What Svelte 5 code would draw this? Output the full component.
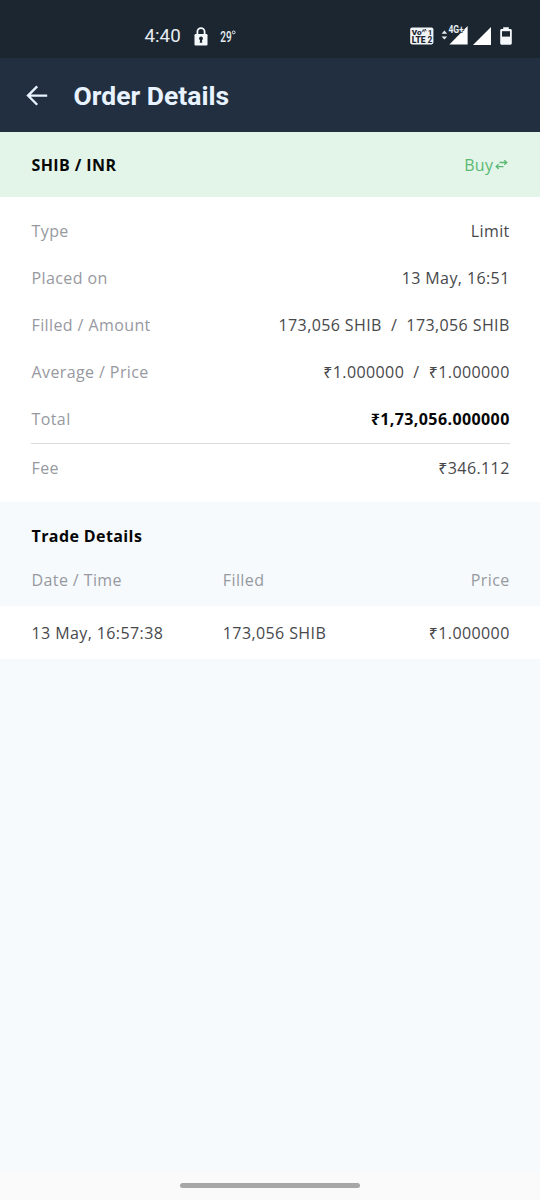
<script lang="ts">
	interface Row {
		label: string;
		value: string;
		total?: boolean;
	}

	interface Trade {
		time: string;
		filled: string;
		price: string;
	}

	const pair = 'SHIB / INR';

	const rows: Row[] = [
		{ label: 'Type', value: 'Limit' },
		{ label: 'Placed on', value: '13 May, 16:51' },
		{ label: 'Filled / Amount', value: '173,056 SHIB  /  173,056 SHIB' },
		{ label: 'Average / Price', value: '₹1.000000  /  ₹1.000000' },
		{ label: 'Total', value: '₹1,73,056.000000', total: true },
		{ label: 'Fee', value: '₹346.112' }
	];

	const trades: Trade[] = [
		{ time: '13 May, 16:57:38', filled: '173,056 SHIB', price: '₹1.000000' }
	];
</script>

<div class="screen">
	<div class="status-bar">
		<div class="status-left">
			<span class="clock">4:40</span>
			<svg class="lock" width="14" height="19" viewBox="0 0 14 19">
				<path d="M3.4 8V4.8a3.6 3.6 0 0 1 7.2 0V8" fill="none" stroke="#f4f8fb" stroke-width="1.8" />
				<rect x="0.5" y="7" width="13" height="11.5" rx="1.2" fill="#f4f8fb" />
				<circle cx="7" cy="11.5" r="1.9" fill="#1c2631" />
				<path d="M6.2 12h1.6l.5 3.7H5.7z" fill="#1c2631" />
			</svg>
			<svg class="temp" width="17" height="22" viewBox="0 -3 17 22">
				<text x="0.2" y="13.6" textLength="11.4" lengthAdjust="spacingAndGlyphs">29</text>
				<circle cx="13.7" cy="4.4" r="1.4" fill="none" stroke="#e6edf2" stroke-width="1" />
			</svg>
		</div>
		<div class="status-right">
			<svg class="volte" width="24" height="18" viewBox="0 0 24 18">
				<rect x="0.2" y="0.4" width="23.2" height="17" rx="1.8" fill="#f0f4f7" />
				<g fill="#1c2631">
					<text x="1.8" y="8" font-size="8" textLength="9.8" lengthAdjust="spacingAndGlyphs">Vo</text>
					<text x="1.8" y="16.2" font-size="8.6" textLength="13.8" lengthAdjust="spacingAndGlyphs">LTE</text>
					<text class="sim" x="17.8" y="8" font-size="8">1</text>
					<text class="sim" x="17.4" y="16.2" font-size="8.4">2</text>
				</g>
				<path d="M12 5.2 13.3 2.6l1.1 2.6M14.4 3.6l.9-1.6.8 2.2" fill="none" stroke="#1c2631" stroke-width="0.8" />
			</svg>
			<svg class="network" width="28" height="22" viewBox="0 0 28 22">
				<path d="M0.6 10.8 3.4 7.6l2.8 3.2zM0.6 13.4h5.6l-2.8 3.2z" fill="#e6edf2" />
				<path d="M26.6 3v18.4H8.4z" fill="#fff" />
				<text class="g4" x="7.4" y="10" textLength="15.4" lengthAdjust="spacingAndGlyphs">4G+</text>
			</svg>
			<svg class="signal" width="18" height="18" viewBox="0 0 18 18">
				<path d="M18 0v18H0z" fill="#fff" />
			</svg>
			<svg class="battery" width="12" height="18" viewBox="0 0 12 18">
				<path
					d="M3.2 0.2h5.6v1.7h1.5c.8 0 1.5.5 1.5 1.3v13.1c0 .8-.7 1.5-1.5 1.5H1.7c-.8 0-1.5-.7-1.5-1.5V3.2c0-.8.7-1.3 1.5-1.3h1.5z"
					fill="#f4f8fb"
				/>
				<rect x="2" y="4.2" width="8" height="5.4" fill="#1c2631" />
			</svg>
		</div>
	</div>

	<header class="app-bar">
		<svg class="back" width="22" height="22" viewBox="0 0 22 22">
			<path
				d="M21.2 10.6H2.2M11.2 1.4L2 10.6l9.2 9.2"
				fill="none"
				stroke="#e8f3ff"
				stroke-width="2.3"
			/>
		</svg>
		<h1>Order Details</h1>
	</header>

	<div class="pair">
		<strong>{pair}</strong>
		<span class="side">
			Buy
			<svg width="13" height="11" viewBox="0 0 13 11">
				<path
					d="M4.5 3.5H11.6M9.3 1.2l2.5 2.3-2.5 2.3M8.5 7.6H1.4M3.7 5.3L1.2 7.6l2.5 2.3"
					fill="none"
					stroke="#5bb974"
					stroke-width="1.3"
				/>
			</svg>
		</span>
	</div>

	<section class="details">
		{#each rows as row}
			<div class="row" class:total={row.total}>
				<span class="label">{row.label}</span>
				<span class="value">{row.value}</span>
			</div>
		{/each}
	</section>

	<section class="trades">
		<h2>Trade Details</h2>
		<div class="trade-grid head">
			<span>Date / Time</span>
			<span>Filled</span>
			<span>Price</span>
		</div>
		{#each trades as trade}
			<div class="trade-grid trade">
				<span>{trade.time}</span>
				<span>{trade.filled}</span>
				<span>{trade.price}</span>
			</div>
		{/each}
	</section>

	<div class="nav-bar">
		<div class="handle"></div>
	</div>
</div>

<style>
	:global(body) {
		margin: 0;
	}

	.screen {
		display: flex;
		flex-direction: column;
		width: 540px;
		height: 1200px;
		overflow: hidden;
		background: #f6fafd;
		color: #47484b;
		font-family: 'Open Sans', 'Noto Sans', sans-serif;
		font-size: 16px;
		line-height: 22px;
		letter-spacing: 0.4px;
	}

	svg {
		display: block;
		flex: none;
	}

	.status-bar {
		box-sizing: border-box;
		display: flex;
		justify-content: space-between;
		align-items: center;
		height: 58px;
		padding: 14px 28px 0 144.5px;
		background: #1c2631;
		font-family: Roboto, sans-serif;
		letter-spacing: 0;
	}

	.status-left,
	.status-right {
		display: flex;
		align-items: center;
	}

	.clock {
		width: 49.5px;
		color: #e6edf2;
		font-size: 18.8px;
	}

	.temp {
		margin-left: 12px;
	}

	.temp text {
		fill: #e6edf2;
		font-size: 15px;
		font-weight: 500;
	}

	.volte {
		margin-right: 7px;
	}

	.volte text {
		font-weight: 900;
	}

	.volte .sim {
		font-weight: 700;
	}

	.network {
		margin: -4px 4px 0 0;
	}

	.g4 {
		fill: #e6edf2;
		stroke: #1c2631;
		stroke-width: 1.2px;
		paint-order: stroke;
		font-size: 10px;
		font-weight: 700;
	}

	.signal {
		margin-right: 9px;
	}

	.app-bar {
		box-sizing: border-box;
		display: flex;
		align-items: center;
		height: 74px;
		padding: 1px 26px 0;
		background: #212f40;
	}

	h1 {
		margin: 0 0 0 25.5px;
		color: #e8f3ff;
		font-family: Roboto, sans-serif;
		font-size: 26.5px;
		font-weight: 700;
		line-height: 32px;
		letter-spacing: 0;
	}

	.pair {
		box-sizing: border-box;
		display: flex;
		justify-content: space-between;
		align-items: center;
		height: 65px;
		padding: 0 32px 0 31.5px;
		background: #e3f5e8;
	}

	.pair strong {
		color: #060807;
		font-weight: 700;
	}

	.side {
		display: flex;
		align-items: center;
		gap: 1.5px;
		color: #5bb974;
	}

	.details {
		padding: 11px 30px 11px 31px;
		background: #fff;
	}

	.row {
		box-sizing: border-box;
		display: flex;
		justify-content: space-between;
		align-items: center;
		height: 47px;
		padding: 0 0.3px 1px 0.5px;
	}

	.row:last-child {
		padding-bottom: 0;
	}

	.label {
		color: #97999f;
	}

	.value {
		white-space: pre;
	}

	.total {
		height: 48px;
		border-bottom: 1px solid #dcdcde;
	}

	.total .value {
		color: #060607;
		font-weight: 700;
	}

	.trades {
		flex: 1;
		padding-top: 23px;
	}

	h2 {
		margin: 0;
		padding: 0 31.5px;
		color: #060607;
		font-size: 16px;
		font-weight: 700;
		line-height: 22px;
	}

	.trade-grid {
		box-sizing: border-box;
		display: grid;
		grid-template-columns: 2fr 1.5fr 1.5fr;
		align-items: center;
		padding: 0 30.3px 0 31.5px;
	}

	.trade-grid span:last-child {
		text-align: right;
	}

	.head {
		height: 59px;
		padding-top: 6px;
		color: #97999f;
	}

	.trade {
		height: 53px;
		background: #fff;
	}

	.nav-bar {
		box-sizing: border-box;
		display: flex;
		justify-content: center;
		align-items: center;
		height: 28px;
		padding-bottom: 1px;
		background: #fafafa;
	}

	.handle {
		width: 180px;
		height: 5px;
		border-radius: 3px;
		background: #a6a7a6;
	}
</style>
